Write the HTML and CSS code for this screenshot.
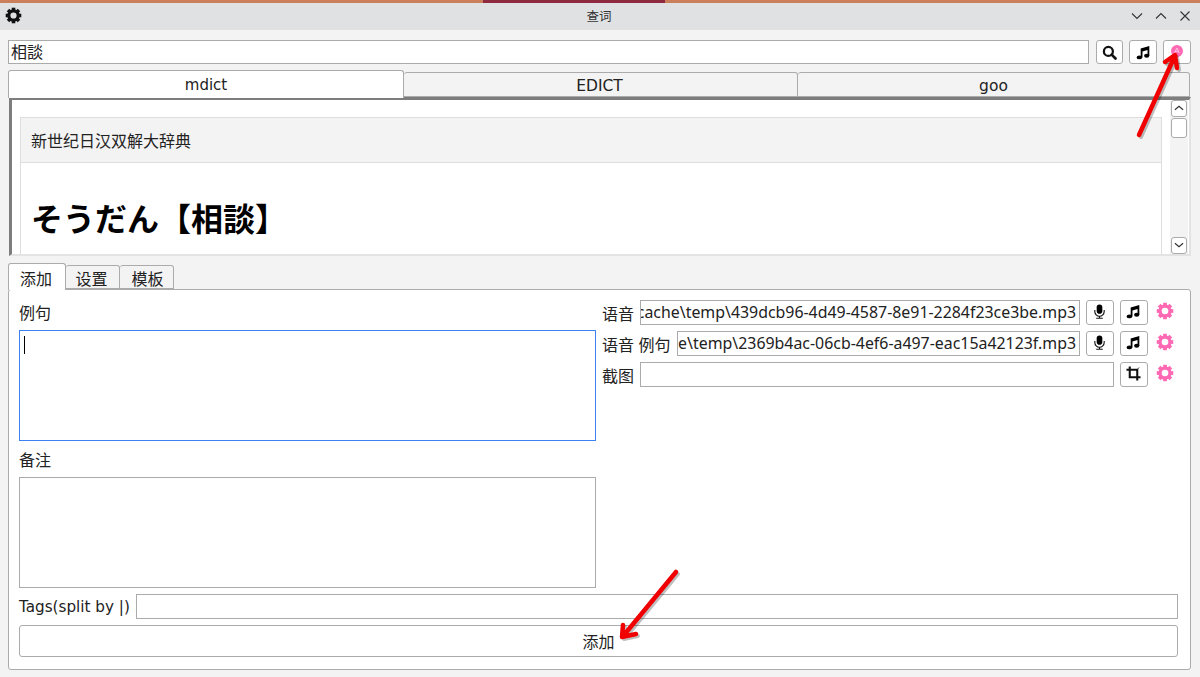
FILE: index.html
```html
<!DOCTYPE html>
<html>
<head>
    <meta charset="utf-8" />
    <title>查词</title>
    <link rel="stylesheet" href="styles.css">
</head>
<body>
    <svg class="defs" width="0" height="0">
        <symbol id="gear" viewBox="0 0 24 24">
            <circle cx="12" cy="12" r="6.6" fill="none" stroke="currentColor" stroke-width="4.4"/>
            <g fill="currentColor">
                <rect x="9.5" y="1" width="5" height="5"/>
                <rect x="9.5" y="1" width="5" height="5" transform="rotate(45 12 12)"/>
                <rect x="9.5" y="1" width="5" height="5" transform="rotate(90 12 12)"/>
                <rect x="9.5" y="1" width="5" height="5" transform="rotate(135 12 12)"/>
                <rect x="9.5" y="1" width="5" height="5" transform="rotate(180 12 12)"/>
                <rect x="9.5" y="1" width="5" height="5" transform="rotate(225 12 12)"/>
                <rect x="9.5" y="1" width="5" height="5" transform="rotate(270 12 12)"/>
                <rect x="9.5" y="1" width="5" height="5" transform="rotate(315 12 12)"/>
            </g>
        </symbol>
        <symbol id="music" viewBox="0 0 16 16">
            <path d="M5 3.6 14.2 1v10.6h-1.9V5.2L6.9 6.8v6.6H5z"/>
            <ellipse cx="3.6" cy="13.2" rx="2.9" ry="2.1"/>
            <ellipse cx="11.4" cy="11.4" rx="2.8" ry="2.1"/>
        </symbol>
        <symbol id="mic" viewBox="0 0 16 16">
            <rect x="5" y="0.5" width="6" height="10" rx="3"/>
            <path d="M3 6.5v1.5a5 5 0 0 0 10 0V6.5M8 13v2M4.5 15.2h7" fill="none" stroke="currentColor" stroke-width="1.2"/>
        </symbol>
    </svg>

    <div class="strip"><div class="strip-dark"></div></div>

    <header class="titlebar">
        <svg class="title-gear"><use href="#gear"/></svg>
        <span class="title-text">查词</span>
        <div class="win-btns">
            <svg class="win-btn" viewBox="0 0 12 12"><path d="M1 3.5 6 8.5 11 3.5"/></svg>
            <svg class="win-btn" viewBox="0 0 12 12"><path d="M1 8.5 6 3.5 11 8.5"/></svg>
            <svg class="win-btn" viewBox="0 0 12 12"><path d="M1.5 1.5 10.5 10.5M10.5 1.5 1.5 10.5"/></svg>
        </div>
    </header>

    <div class="search-row">
        <div class="field search-field">相談</div>
        <button class="icon-btn search-btn">
            <svg class="icon" viewBox="0 0 16 16"><circle cx="6.8" cy="6.8" r="4.8" fill="none" stroke="currentColor" stroke-width="2.4"/><path d="M10.3 10.3 14.4 14.4" stroke="currentColor" stroke-width="2.8" stroke-linecap="round"/></svg>
        </button>
        <button class="icon-btn"><svg class="icon"><use href="#music"/></svg></button>
        <button class="icon-btn"><span class="pink-dot">A</span></button>
    </div>

    <div class="dict-tabs">
        <div class="dict-tab active">mdict</div>
        <div class="dict-tab">EDICT</div>
        <div class="dict-tab">goo</div>
    </div>

    <div class="webview">
        <div class="page">
            <div class="dict-card">
                <div class="dict-name">新世纪日汉双解大辞典</div>
                <h1 class="headword">そうだん【相談】</h1>
            </div>
        </div>
        <div class="scrollbar">
            <div class="sb-btn"><svg viewBox="0 0 12 12"><path d="M2.5 7.5 6 4.5 9.5 7.5"/></svg></div>
            <div class="sb-thumb"></div>
            <div class="sb-track"></div>
            <div class="sb-btn"><svg viewBox="0 0 12 12"><path d="M2.5 4.5 6 7.5 9.5 4.5"/></svg></div>
        </div>
    </div>

    <div class="panel-tabs">
        <div class="panel-tab active">添加</div>
        <div class="panel-tab">设置</div>
        <div class="panel-tab">模板</div>
    </div>

    <div class="panel">
        <div class="columns">
            <div class="col-left">
                <div class="label">例句</div>
                <div class="textbox focused"><span class="caret"></span></div>
                <div class="label label-second">备注</div>
                <div class="textbox"></div>
            </div>
            <div class="col-right">
                <div class="media-row">
                    <span class="media-label">语音</span>
                    <div class="field path-field">cache\temp\439dcb96-4d49-4587-8e91-2284f23ce3be.mp3</div>
                    <button class="icon-btn small"><svg class="icon"><use href="#mic"/></svg></button>
                    <button class="icon-btn small"><svg class="icon"><use href="#music"/></svg></button>
                    <svg class="pink-gear"><use href="#gear"/></svg>
                </div>
                <div class="media-row">
                    <span class="media-label">语音 例句</span>
                    <div class="field path-field">e\temp\2369b4ac-06cb-4ef6-a497-eac15a42123f.mp3</div>
                    <button class="icon-btn small"><svg class="icon"><use href="#mic"/></svg></button>
                    <button class="icon-btn small"><svg class="icon"><use href="#music"/></svg></button>
                    <svg class="pink-gear"><use href="#gear"/></svg>
                </div>
                <div class="media-row">
                    <span class="media-label">截图</span>
                    <div class="field path-field"></div>
                    <button class="icon-btn small">
                        <svg class="icon" viewBox="0 0 16 16"><path d="M4 0.5V12H15.5M0.5 4H12V15.5" fill="none" stroke="currentColor" stroke-width="2.2"/><path d="M11 5 14 1.5" stroke="currentColor" stroke-width="0.8"/></svg>
                    </button>
                    <svg class="pink-gear"><use href="#gear"/></svg>
                </div>
            </div>
        </div>
        <div class="tags-row">
            <span class="tags-label">Tags(split by |)</span>
            <div class="field tags-field"></div>
        </div>
        <button class="add-btn">添加</button>
    </div>

    <svg class="arrows" viewBox="0 0 1200 677">
        <g class="arrow-shadow" transform="translate(2 2)">
            <path d="M1139 135 1173 60M1165 62 1175 55 1177 68"/>
            <path d="M676 572 624 635M623 625 622 637 636 634"/>
        </g>
        <g class="arrow">
            <path d="M1139 135 1173 60M1165 62 1175 55 1177 68"/>
            <path d="M676 572 624 635M623 625 622 637 636 634"/>
        </g>
    </svg>
</body>
</html>
```

FILE: styles.css
```css
* {
    box-sizing: border-box;
}

html, body {
    margin: 0;
    height: 677px;
    overflow: hidden;
}

body {
    position: relative;
    background-color: #F3F3F3;
    color: #222222;
    font-family: "DejaVu Sans", "Noto Sans CJK SC", sans-serif;
    font-size: 15px;
}

.defs {
    position: absolute;
}

.strip {
    height: 3px;
    background-color: #CB7F5B;
    padding-left: 483px;
}

.strip-dark {
    width: 182px;
    height: 3px;
    background-color: #8E2B3E;
}

.titlebar {
    position: relative;
    height: 27px;
    background-color: #DFE1E3;
    display: flex;
    align-items: center;
    justify-content: center;
    padding: 0 2px 2px 0;
}

.title-gear {
    position: absolute;
    left: 5px;
    top: 4px;
    width: 17px;
    height: 17px;
    color: #111111;
}

.title-text {
    color: #333333;
    font-size: 12.5px;
}

.win-btns {
    position: absolute;
    right: 9px;
    top: 7px;
    display: flex;
    gap: 12px;
}

.win-btn {
    width: 12px;
    height: 12px;
    fill: none;
    stroke: #333333;
    stroke-width: 1.1;
}

.search-row {
    display: flex;
    gap: 6px;
    padding: 10px 9px 0 8px;
    height: 34px;
}

.search-row .icon-btn {
    height: 24px;
}

.search-row .search-btn {
    width: 27px;
    margin-left: 1px;
}

.field {
    background-color: #FFFFFF;
    border: 1px solid #ABABAB;
    font-family: "Noto Sans", "Noto Sans CJK JP", sans-serif;
}

.search-field {
    flex: 1;
    padding-left: 2px;
    font-size: 16px;
    line-height: 22px;
}

.icon-btn {
    width: 28px;
    padding: 0;
    background-color: #FFFFFF;
    border: 1px solid #ABABAB;
    border-radius: 3px;
    display: flex;
    align-items: center;
    justify-content: center;
    color: #111111;
}

.icon {
    width: 15px;
    height: 15px;
}

.pink-dot {
    width: 12px;
    height: 12px;
    margin-top: -2px;
    border-radius: 50%;
    background-color: #FF69B4;
    color: #FFD0E8;
    font-size: 8px;
    line-height: 12px;
    text-align: center;
}

.dict-tabs {
    display: flex;
    margin: 6px 10px 0 8px;
    height: 27px;
}

.dict-tab {
    flex: 1;
    height: 25px;
    margin-top: 2px;
    padding-right: 2px;
    border: 1px solid #ABABAB;
    border-left-width: 0;
    border-radius: 3px 3px 0 0;
    text-align: center;
    line-height: 26px;
    font-size: 15.5px;
}

.dict-tab:last-child {
    padding-right: 0;
}

.dict-tab.active {
    flex: 0 0 396px;
    height: 28px;
    margin-top: 0;
    padding-right: 0;
    background-color: #FFFFFF;
    border-left-width: 1px;
    border-bottom: 0;
    font-size: 15px;
    line-height: 28px;
    position: relative;
    z-index: 1;
}

.webview {
    margin: 0 9px 0 9px;
    height: 159px;
    display: flex;
    background-color: #FFFFFF;
    border-top: 3px solid #7D7D7D;
    border-left: 3px solid #7D7D7D;
    border-bottom: 2px solid #E3E3E3;
    border-right: 2px solid #E3E3E3;
    overflow: hidden;
}

.page {
    flex: 1;
    padding: 17px 8px 0 8px;
    overflow: hidden;
}

.dict-card {
    border: 1px solid #DEDEDE;
    height: 160px;
}

.dict-name {
    height: 45px;
    background-color: #F3F3F3;
    border-bottom: 1px solid #DEDEDE;
    padding-left: 10px;
    font-family: "Noto Sans CJK SC", sans-serif;
    font-size: 16px;
    line-height: 45px;
    color: #222222;
}

.headword {
    margin: 34px 0 0 10px;
    font-family: "Liberation Sans", "Noto Sans CJK JP", sans-serif;
    font-size: 32px;
    line-height: 46px;
    font-weight: bold;
    color: #000000;
}

.scrollbar {
    width: 18px;
    margin-right: 1px;
    display: flex;
    flex-direction: column;
    background-color: #F3F3F3;
}

.sb-btn {
    height: 17px;
    background-color: #FFFFFF;
    border: 1px solid #ABABAB;
    border-radius: 3px;
    margin: 0 1px;
}

.sb-btn svg {
    display: block;
    width: 14px;
    height: 14px;
    fill: none;
    stroke: #333333;
    stroke-width: 1;
}

.sb-thumb {
    height: 20px;
    margin: 1px 1px 0;
    background-color: #FFFFFF;
    border: 1px solid #ABABAB;
    border-radius: 3px;
}

.sb-track {
    flex: 1;
}

.panel-tabs {
    display: flex;
    margin: 6px 0 0 8px;
    height: 27px;
    align-items: flex-end;
}

.panel-tab {
    height: 24px;
    width: 54px;
    padding-right: 2px;
    border: 1px solid #ABABAB;
    border-left-width: 0;
    border-radius: 3px 3px 0 0;
    text-align: center;
    font-family: "Noto Sans CJK SC", sans-serif;
    font-size: 16px;
    line-height: 25px;
}

.panel-tab:last-child {
    padding: 0 0 0 2px;
}

.panel-tab.active {
    height: 27px;
    width: 58px;
    margin-bottom: -1px;
    background-color: #FFFFFF;
    border-left-width: 1px;
    border-bottom: 0;
    line-height: 28px;
    position: relative;
    z-index: 1;
}

.panel {
    margin: 0 9px 0 8px;
    height: 381px;
    background-color: #FFFFFF;
    border: 1px solid #ABABAB;
    border-radius: 3px;
    padding: 0 12px 0 10px;
    font-family: "Noto Sans CJK SC", sans-serif;
    font-size: 16px;
}

.columns {
    display: flex;
    gap: 6px;
    height: 304px;
}

.col-left {
    flex: 0 0 577px;
}

.col-right {
    flex: 1;
    min-width: 0;
    padding-top: 10px;
    display: flex;
    flex-direction: column;
    gap: 6px;
}

.label {
    height: 40px;
    padding-top: 9px;
    line-height: 26px;
}

.label-second {
    height: 36px;
    padding-top: 5px;
}

.textbox {
    height: 111px;
    border: 1px solid #ABABAB;
    background-color: #FFFFFF;
    padding: 5px 4px;
}

.textbox.focused {
    border-color: #3B82F0;
}

.caret {
    display: block;
    width: 1px;
    height: 18px;
    background-color: #000000;
}

.media-row {
    display: flex;
    align-items: center;
    gap: 6px;
    height: 25px;
}

.media-label {
    white-space: nowrap;
    word-spacing: 1px;
}

.path-field {
    flex: 1;
    min-width: 0;
    height: 25px;
    overflow: hidden;
    display: flex;
    justify-content: flex-end;
    padding-right: 3px;
    font-size: 15.9px;
    line-height: 23px;
    white-space: nowrap;
}

.icon-btn.small {
    height: 25px;
    width: 28px;
}

.icon-btn.small .icon {
    margin: -2px 1px 0 0;
}

.pink-gear {
    width: 18px;
    height: 18px;
    margin: 0 4px 3px 2px;
    color: #FF69B4;
}

.tags-row {
    display: flex;
    align-items: center;
    gap: 6px;
    height: 25px;
}

.tags-label {
    font-family: "DejaVu Sans", sans-serif;
    font-size: 15.2px;
}

.tags-field {
    flex: 1;
    height: 25px;
}

.add-btn {
    display: block;
    width: 100%;
    height: 32px;
    margin-top: 6px;
    background-color: #FFFFFF;
    border: 1px solid #ABABAB;
    border-radius: 3px;
    font-family: "Noto Sans CJK SC", sans-serif;
    font-size: 16px;
    color: #222222;
}

.arrows {
    position: absolute;
    left: 0;
    top: 0;
    width: 1200px;
    height: 677px;
    pointer-events: none;
    fill: none;
    stroke-linecap: round;
    stroke-linejoin: round;
}

.arrow {
    stroke: #F00000;
    stroke-width: 4.5;
}

.arrow-shadow {
    stroke: #000000;
    stroke-width: 4;
    opacity: 0.25;
}
```
